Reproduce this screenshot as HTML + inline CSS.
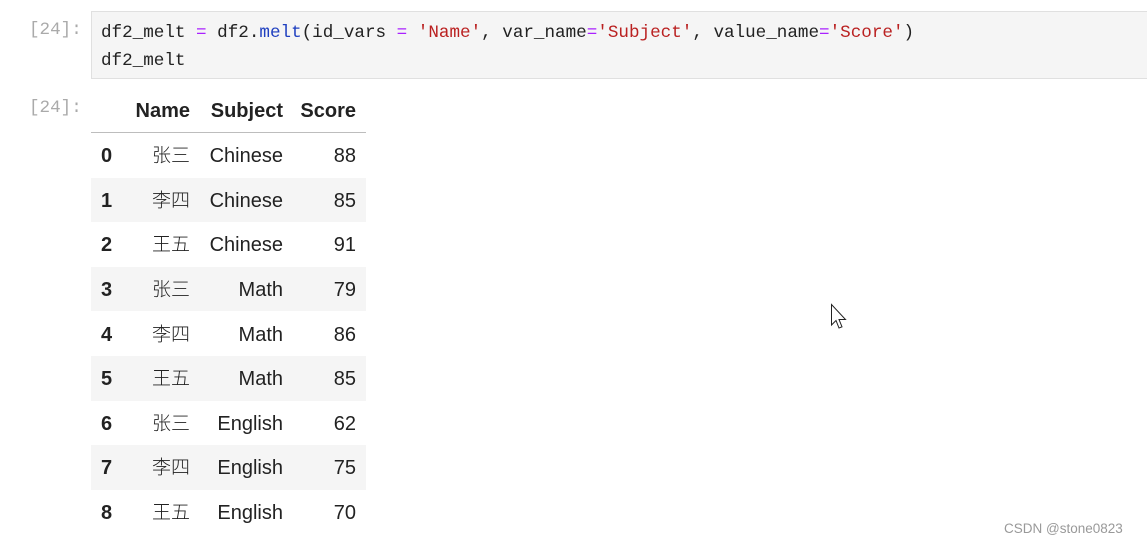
<!DOCTYPE html>
<html><head><meta charset="utf-8"><style>
body{margin:0;width:1147px;height:545px;background:#fff;position:relative;overflow:hidden;font-family:"Liberation Sans","Noto Sans CJK SC",sans-serif}
.p{position:absolute;font-family:"Liberation Mono",monospace;font-size:17.6px;color:#aaa}
.code{position:absolute;left:91px;top:11px;width:1060px;height:68px;background:#f5f5f5;border:1px solid #e0e0e0;box-sizing:border-box}
.code pre{margin:0;position:absolute;left:9px;top:7px;font-family:"Liberation Mono",monospace;font-size:17.6px;line-height:28px;color:#222}
.o{color:#aa22ff}.f{color:#2040c0}.s{color:#ba2121}
.row{position:absolute;left:91px;width:275px;height:44.6px;font-size:20px;line-height:1;color:#222}
.row span{position:absolute;top:50%;transform:translateY(-45%)}
.st{background:#f5f5f5}
.i{left:10px;font-weight:bold}
.n{right:176px}.sj{right:83px}.sc{right:10px}
.row span.c{font-family:"Noto Sans CJK SC",sans-serif;font-weight:300;font-size:19px;transform:translateY(-55%)}
</style></head><body>
<div class="p" style="left:29px;top:20px">[24]:</div>
<div class="code"><pre>df2_melt <span class="o">=</span> df2.<span class="f">melt</span>(id_vars <span class="o">=</span> <span class="s">'Name'</span>, var_name<span class="o">=</span><span class="s">'Subject'</span>, value_name<span class="o">=</span><span class="s">'Score'</span>)
df2_melt</pre></div>
<div class="p" style="left:29px;top:98px">[24]:</div>
<div class="row" style="top:88px;height:44px;border-bottom:1px solid #bdbdbd;font-weight:bold"><span class="n">Name</span><span class="sj">Subject</span><span class="sc">Score</span></div>
<div class="row" style="top:133px"><span class="i">0</span><span class="n c">张三</span><span class="sj">Chinese</span><span class="sc">88</span></div>
<div class="row st" style="top:177.6px"><span class="i">1</span><span class="n c">李四</span><span class="sj">Chinese</span><span class="sc">85</span></div>
<div class="row" style="top:222.2px"><span class="i">2</span><span class="n c">王五</span><span class="sj">Chinese</span><span class="sc">91</span></div>
<div class="row st" style="top:266.8px"><span class="i">3</span><span class="n c">张三</span><span class="sj">Math</span><span class="sc">79</span></div>
<div class="row" style="top:311.4px"><span class="i">4</span><span class="n c">李四</span><span class="sj">Math</span><span class="sc">86</span></div>
<div class="row st" style="top:356px"><span class="i">5</span><span class="n c">王五</span><span class="sj">Math</span><span class="sc">85</span></div>
<div class="row" style="top:400.6px"><span class="i">6</span><span class="n c">张三</span><span class="sj">English</span><span class="sc">62</span></div>
<div class="row st" style="top:445.2px"><span class="i">7</span><span class="n c">李四</span><span class="sj">English</span><span class="sc">75</span></div>
<div class="row" style="top:489.8px"><span class="i">8</span><span class="n c">王五</span><span class="sj">English</span><span class="sc">70</span></div>
<svg style="position:absolute;left:830px;top:303px" width="20" height="30" viewBox="0 0 20 30"><path d="M1.5 1.5 L1.5 22 L6 17.5 L9 25 L12 23.8 L9 16.5 L15.5 16.5 Z" fill="#fff" stroke="#222" stroke-width="1"/></svg>
<div style="position:absolute;left:1004px;top:521px;font-size:13.5px;color:#999">CSDN @stone0823</div>
</body></html>
